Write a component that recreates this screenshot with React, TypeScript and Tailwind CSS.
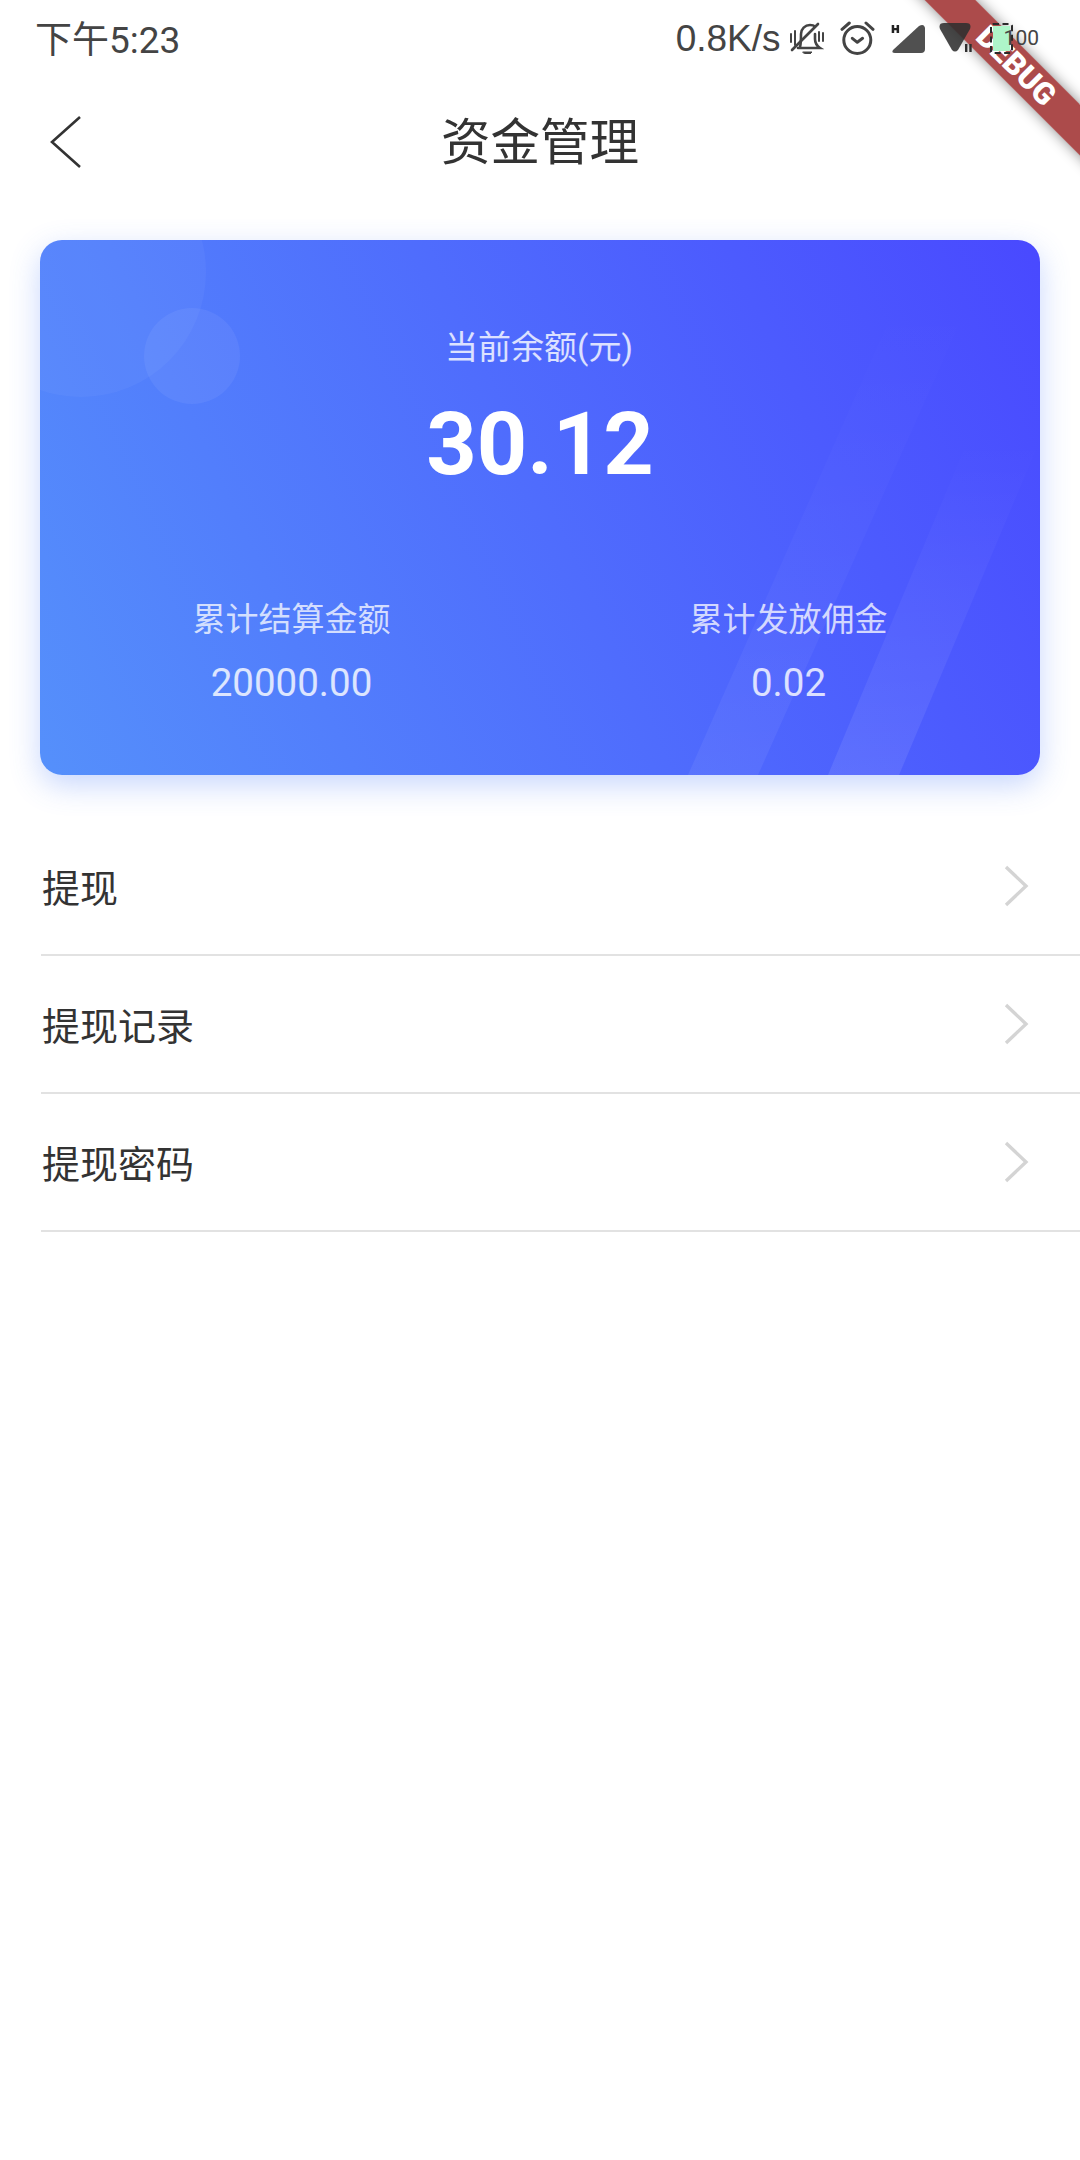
const zh = "font-['Roboto','Noto_Sans_CJK_SC',sans-serif]";

function StatusBar() {
  return (
    <div className="relative z-10 flex h-[80px] items-center justify-between pr-[41px] pl-[35px] text-[#444444]">
      <span className="text-[37px] leading-none">下午5:23</span>
      <div className="flex items-center pb-[4px]">
        <span className="text-[37px] leading-none font-['Liberation_Sans',sans-serif]">0.8K/s</span>
        <svg className="ml-[9px]" width="34" height="32" viewBox="0 0 34 32" fill="none" stroke="#444444" strokeWidth="2.6" strokeLinecap="round">
          <path d="M10 25c1-3 1-7 1-13 0-5 4-9 9-9 2 0 4 .5 5 1.500" />
          <path d="M25 12v5c0 4 2 7 5 9H8" />
          <path d="M13 30h9l-2 2h-5z" fill="#444444" strokeWidth="1" />
          <path d="M28 2 2 28" />
          <path d="M1 12v8M5 9v14M29 10v9M33 11v8" strokeWidth="2" />
        </svg>
        <svg className="ml-[16px]" width="35" height="34" viewBox="0 0 35 34" fill="none" stroke="#444444" strokeWidth="3" strokeLinecap="round" strokeLinejoin="round">
          <circle cx="17.300" cy="19" r="13.500" />
          <path d="M12.300 17.300l5 4 5.300-4" />
          <path d="M2 8.300 9.300 2M26 2l7 6.300" />
        </svg>
        <svg className="ml-[16px]" width="34" height="31" viewBox="0 0 34 31" fill="#505050">
          <path d="M2 27 28 3q5-3 6 2v21q0 4-4 4H4q-4 0-2-3z" />
          <path d="M0.700 2h2.500v3h2.400V2h2.500v8H5.600V7.200H3.200V10H0.700z" fill="#222222" />
        </svg>
        <svg className="ml-[14px]" width="34" height="30" viewBox="0 0 34 30" fill="#2f2f2f" fillOpacity="0.88">
          <path d="M1 6q-2-6 4-6h22q6 0 4 6L19 27q-3 3-6 0z" />
          <path d="M26 21h2.400v8H26zM30.300 21h2.400v8h-2.400z" fillOpacity="1" />
        </svg>
        <div className="ml-[17px] h-[31px] w-[23px] rounded-[3px] border-2 border-dashed border-[#2a2a2a] p-[1px]">
          <div className="h-full w-full bg-[#aef5c9]" />
        </div>
        <span className="-ml-[9px] text-[21px] leading-none">100</span>
      </div>
    </div>
  );
}

function DebugBanner() {
  return (
    <div className="pointer-events-none absolute top-0 right-0 h-[190px] w-[190px] overflow-hidden">
      <div className="absolute top-[48px] right-[-86px] flex h-[36px] w-[300px] rotate-45 items-center justify-center bg-[#971e1e]/80 text-[30.600px] font-black text-white shadow-[0_0_14px_rgba(0,0,0,0.45)] font-['Roboto',sans-serif]">
        DEBUG
      </div>
    </div>
  );
}

function NavBar() {
  return (
    <div className="relative flex h-[125px] items-center justify-center">
      <svg className="absolute top-[35px] left-[48px]" width="36" height="54" viewBox="0 0 36 54" fill="none" stroke="#333333" strokeWidth="2.6">
        <path d="M32 2 4 27l28 25" />
      </svg>
      <span className="pt-[3px] text-[49.500px] leading-none text-[#333333]">资金管理</span>
    </div>
  );
}

function Stat({ label, value }: { label: string; value: string }) {
  return (
    <div className="flex w-[497px] flex-col items-center">
      <span className="text-[33px] leading-[40px] text-white/75">{label}</span>
      <span className="mt-[21px] text-[38.500px] leading-[44px] text-white/80">{value}</span>
    </div>
  );
}

function BalanceCard() {
  return (
    <div className="relative mx-[40px] mt-[35px] h-[535px] overflow-hidden rounded-[22px] bg-[linear-gradient(65deg,#5590fb,#4949ff)] shadow-[0_10px_30px_rgba(70,120,250,0.3)]">
      <svg className="absolute inset-0" width="1000" height="535" viewBox="0 0 1000 535">
        <defs>
          <linearGradient id="stripe-a" x1="0" y1="1" x2="0" y2="0">
            <stop offset="0" stopColor="#ffffff" stopOpacity="0.06" />
            <stop offset="0.5" stopColor="#ffffff" stopOpacity="0.025" />
            <stop offset="1" stopColor="#ffffff" stopOpacity="0" />
          </linearGradient>
          <linearGradient id="stripe-b" x1="0" y1="1" x2="0" y2="0">
            <stop offset="0" stopColor="#ffffff" stopOpacity="0.09" />
            <stop offset="0.6" stopColor="#ffffff" stopOpacity="0.035" />
            <stop offset="1" stopColor="#ffffff" stopOpacity="0" />
          </linearGradient>
        </defs>
        <circle cx="41" cy="32" r="125" fill="#ffffff" fillOpacity="0.04" />
        <circle cx="152" cy="116" r="48" fill="#ffffff" fillOpacity="0.06" />
        <path d="M648 535 858 60h72L718 535z" fill="url(#stripe-a)" />
        <path d="M788 535 928 200h72L859 535z" fill="url(#stripe-b)" />
      </svg>
      <div className="relative flex flex-col items-center pt-[88px]">
        <span className="pr-[2px] text-[33px] leading-[40px] text-white/80">当前余额(元)</span>
        <span className="mt-[26px] text-[88px] leading-[100px] font-bold text-white">30.12</span>
      </div>
      <div className="relative mt-[106px] flex pl-[3px]">
        <Stat label="累计结算金额" value="20000.00" />
        <Stat label="累计发放佣金" value="0.02" />
      </div>
    </div>
  );
}

function MenuRow({ label }: { label: string }) {
  return (
    <div className="flex h-[138px] items-center justify-between border-b-2 border-[#e2e2e2] pr-[51px]">
      <span className="pt-[6px] pl-[1px] text-[38px] leading-none text-[#333333]">{label}</span>
      <svg width="26" height="42" viewBox="0 0 26 42" fill="none" stroke="#d4d4d4" strokeWidth="3.400">
        <path d="M3 2l20 19L3 40" />
      </svg>
    </div>
  );
}

export default function App() {
  return (
    <div className={`relative h-[2160px] w-[1080px] overflow-hidden bg-white ${zh}`}>
      <StatusBar />
      <DebugBanner />
      <NavBar />
      <BalanceCard />
      <div className="mt-[43px] ml-[41px]">
        <MenuRow label="提现" />
        <MenuRow label="提现记录" />
        <MenuRow label="提现密码" />
      </div>
    </div>
  );
}
